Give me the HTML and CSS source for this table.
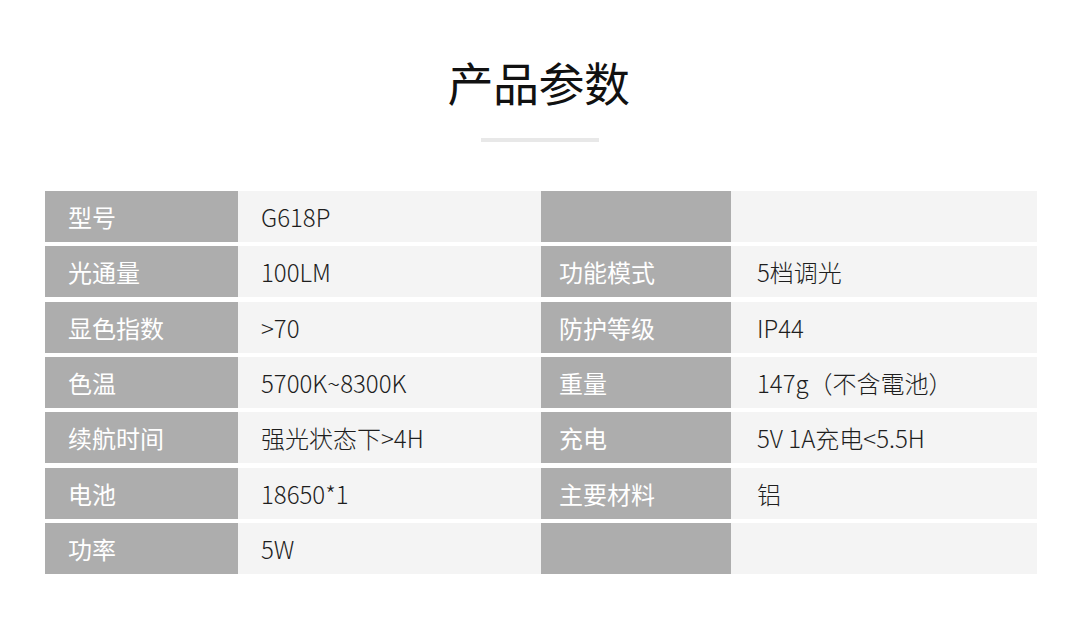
FILE: index.html
```html
<!DOCTYPE html>
<html lang="zh-CN">
<head>
<meta charset="utf-8">
<link rel="stylesheet" href="styles.css">
</head>
<body>
<div class="page">
  <h1 class="title">产品参数</h1>
  <div class="rule"></div>
  <div class="specs">
    <div class="row"><div class="k k1">型号</div><div class="v v1">G618P</div><div class="k k2"></div><div class="v v2"></div></div>
    <div class="row"><div class="k k1">光通量</div><div class="v v1">100LM</div><div class="k k2">功能模式</div><div class="v v2">5档调光</div></div>
    <div class="row"><div class="k k1">显色指数</div><div class="v v1">&gt;70</div><div class="k k2">防护等级</div><div class="v v2">IP44</div></div>
    <div class="row"><div class="k k1">色温</div><div class="v v1">5700K~8300K</div><div class="k k2">重量</div><div class="v v2">147g（不含電池）</div></div>
    <div class="row"><div class="k k1">续航时间</div><div class="v v1">强光状态下&gt;4H</div><div class="k k2">充电</div><div class="v v2">5V 1A充电&lt;5.5H</div></div>
    <div class="row"><div class="k k1">电池</div><div class="v v1">18650*1</div><div class="k k2">主要材料</div><div class="v v2">铝</div></div>
    <div class="row"><div class="k k1">功率</div><div class="v v1">5W</div><div class="k k2"></div><div class="v v2"></div></div>
  </div>
</div>
</body>
</html>
```

FILE: styles.css
```css
html, body {
  margin: 0;
  padding: 0;
  background: #ffffff;
}
body {
  font-family: "Noto Sans CJK SC", "Noto Sans", sans-serif;
  width: 1080px;
  height: 619px;
  overflow: hidden;
}
.page {
  display: flex;
  flex-direction: column;
  align-items: center;
  padding-top: 52px;
}
.title {
  margin: 0;
  font-size: 46px;
  line-height: 58px;
  font-weight: 400;
  color: #111111;
  letter-spacing: -0.5px;
  margin-left: -3px;
}
.rule {
  width: 118px;
  height: 4px;
  background: #e8e8e8;
  margin-top: 28px;
}
.specs {
  margin-top: 49px;
  margin-left: 2px;
  width: 992px;
  display: flex;
  flex-direction: column;
  gap: 4.33px;
}
.row {
  display: grid;
  grid-template-columns: 193px 303px 190px 306px;
  height: 51px;
}
.k, .v {
  display: flex;
  align-items: center;
  white-space: nowrap;
}
.k {
  background: #adadad;
  color: #ffffff;
  font-size: 24px;
  font-weight: 400;
}
.v {
  background: #f4f4f4;
  color: #1e1e1e;
  font-size: 24px;
  font-weight: 300;
}
.k1 { padding-left: 23px; }
.v1 { padding-left: 23px; }
.k2 { padding-left: 18px; }
.v2 { padding-left: 26px; }
```
